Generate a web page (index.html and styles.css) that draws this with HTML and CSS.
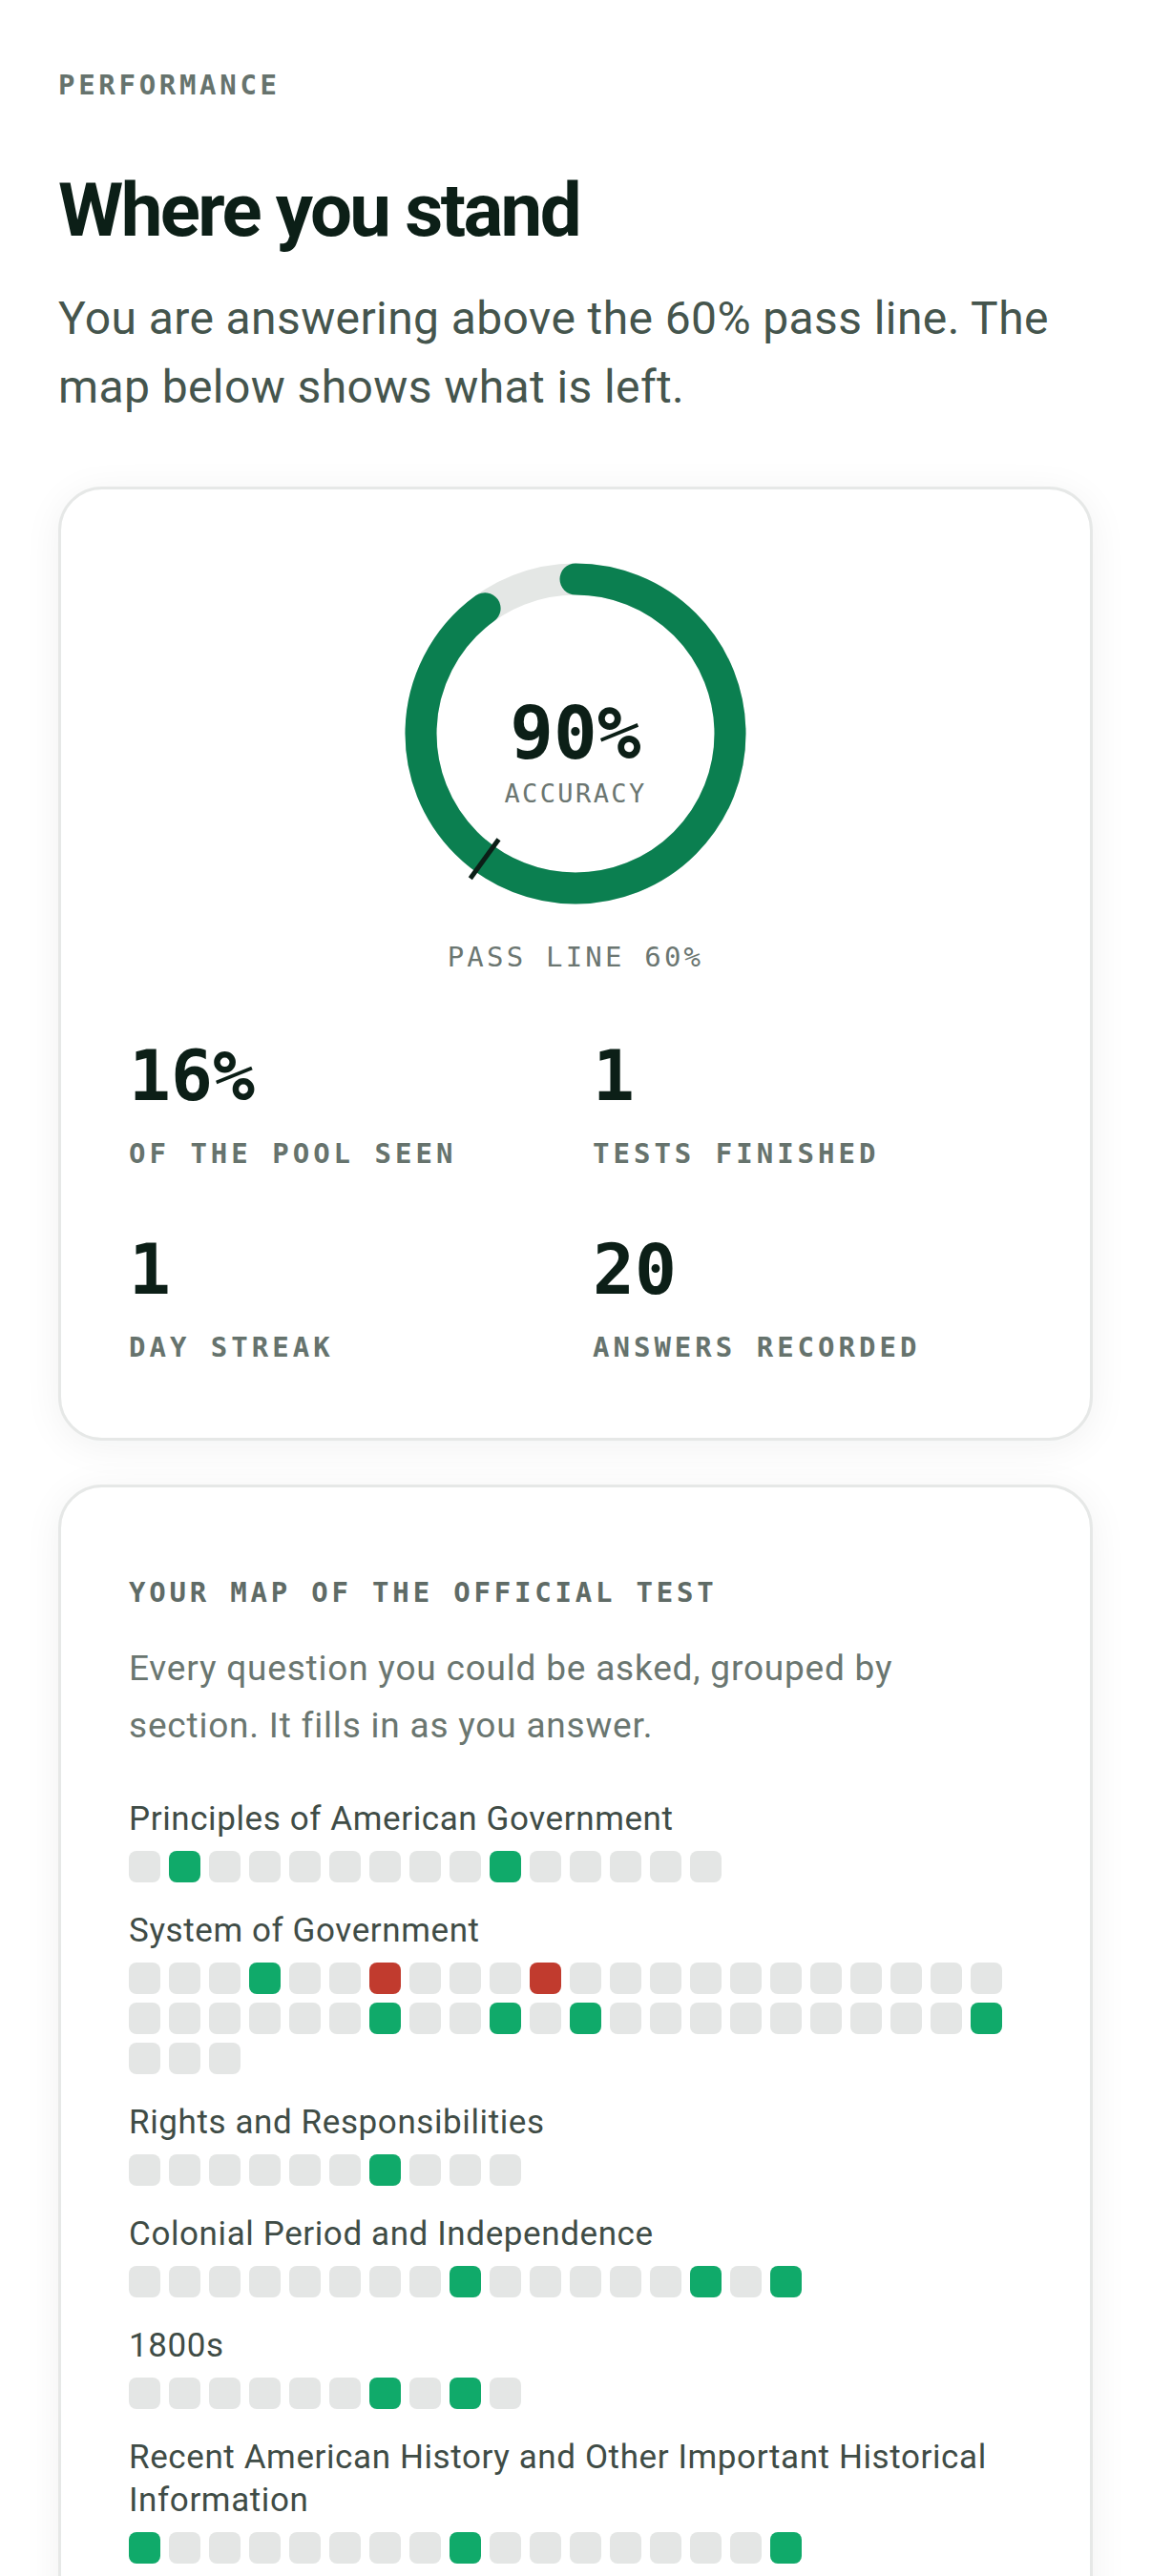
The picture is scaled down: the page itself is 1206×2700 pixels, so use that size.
FILE: index.html
```html
<!DOCTYPE html>
<html lang="en">
<head>
<meta charset="utf-8">
<title>Performance</title>
<link rel="stylesheet" href="styles.css">
</head>
<body>
<main class="page">
  <p class="eyebrow">PERFORMANCE</p>
  <h1 class="title">Where you stand</h1>
  <p class="lead">You are answering above the 60% pass line. The map below shows what is left.</p>

  <section class="card card-summary">
    <div class="ring">
      <svg class="ring-svg" viewBox="0 0 360 360" width="360" height="360" aria-hidden="true">
        <circle class="ring-track" cx="180" cy="180" r="162"/>
        <circle class="ring-fill" cx="180" cy="180" r="162" stroke-dasharray="916.1 1017.9" transform="rotate(-90 180 180)"/>
        <line class="ring-tick" x1="99.5" y1="290.8" x2="69.8" y2="331.7"/>
      </svg>
      <div class="ring-text">
        <div class="ring-value">90%</div>
        <div class="ring-caption">ACCURACY</div>
      </div>
    </div>
    <p class="pass-line">PASS LINE 60%</p>
    <div class="stats">
      <div class="stat">
        <div class="stat-value">16%</div>
        <div class="stat-label">OF THE POOL SEEN</div>
      </div>
      <div class="stat">
        <div class="stat-value">1</div>
        <div class="stat-label">TESTS FINISHED</div>
      </div>
      <div class="stat">
        <div class="stat-value">1</div>
        <div class="stat-label">DAY STREAK</div>
      </div>
      <div class="stat">
        <div class="stat-value">20</div>
        <div class="stat-label">ANSWERS RECORDED</div>
      </div>
    </div>
  </section>

  <section class="card card-map">
    <h2 class="map-title">YOUR MAP OF THE OFFICIAL TEST</h2>
    <p class="map-desc">Every question you could be asked, grouped by section. It fills in as you answer.</p>

    <div class="group">
      <p class="group-name">Principles of American Government</p>
      <div class="cells">
        <span class="cell"></span><span class="cell ok"></span><span class="cell"></span><span class="cell"></span><span class="cell"></span>
        <span class="cell"></span><span class="cell"></span><span class="cell"></span><span class="cell"></span><span class="cell ok"></span>
        <span class="cell"></span><span class="cell"></span><span class="cell"></span><span class="cell"></span><span class="cell"></span>
      </div>
    </div>

    <div class="group">
      <p class="group-name">System of Government</p>
      <div class="cells">
        <span class="cell"></span><span class="cell"></span><span class="cell"></span><span class="cell ok"></span><span class="cell"></span>
        <span class="cell"></span><span class="cell miss"></span><span class="cell"></span><span class="cell"></span><span class="cell"></span>
        <span class="cell miss"></span><span class="cell"></span><span class="cell"></span><span class="cell"></span><span class="cell"></span>
        <span class="cell"></span><span class="cell"></span><span class="cell"></span><span class="cell"></span><span class="cell"></span>
        <span class="cell"></span><span class="cell"></span>
        <span class="cell"></span><span class="cell"></span><span class="cell"></span><span class="cell"></span><span class="cell"></span>
        <span class="cell"></span><span class="cell ok"></span><span class="cell"></span><span class="cell"></span><span class="cell ok"></span>
        <span class="cell"></span><span class="cell ok"></span><span class="cell"></span><span class="cell"></span><span class="cell"></span>
        <span class="cell"></span><span class="cell"></span><span class="cell"></span><span class="cell"></span><span class="cell"></span>
        <span class="cell"></span><span class="cell ok"></span>
        <span class="cell"></span><span class="cell"></span><span class="cell"></span>
      </div>
    </div>

    <div class="group">
      <p class="group-name">Rights and Responsibilities</p>
      <div class="cells">
        <span class="cell"></span><span class="cell"></span><span class="cell"></span><span class="cell"></span><span class="cell"></span>
        <span class="cell"></span><span class="cell ok"></span><span class="cell"></span><span class="cell"></span><span class="cell"></span>
      </div>
    </div>

    <div class="group">
      <p class="group-name">Colonial Period and Independence</p>
      <div class="cells">
        <span class="cell"></span><span class="cell"></span><span class="cell"></span><span class="cell"></span><span class="cell"></span>
        <span class="cell"></span><span class="cell"></span><span class="cell"></span><span class="cell ok"></span><span class="cell"></span>
        <span class="cell"></span><span class="cell"></span><span class="cell"></span><span class="cell"></span><span class="cell ok"></span>
        <span class="cell"></span><span class="cell ok"></span>
      </div>
    </div>

    <div class="group">
      <p class="group-name">1800s</p>
      <div class="cells">
        <span class="cell"></span><span class="cell"></span><span class="cell"></span><span class="cell"></span><span class="cell"></span>
        <span class="cell"></span><span class="cell ok"></span><span class="cell"></span><span class="cell ok"></span><span class="cell"></span>
      </div>
    </div>

    <div class="group">
      <p class="group-name">Recent American History and Other Important Historical Information</p>
      <div class="cells">
        <span class="cell ok"></span><span class="cell"></span><span class="cell"></span><span class="cell"></span><span class="cell"></span>
        <span class="cell"></span><span class="cell"></span><span class="cell"></span><span class="cell ok"></span><span class="cell"></span>
        <span class="cell"></span><span class="cell"></span><span class="cell"></span><span class="cell"></span><span class="cell"></span>
        <span class="cell"></span><span class="cell ok"></span>
      </div>
    </div>

    <div class="group">
      <p class="group-name">Symbols</p>
      <div class="cells">
        <span class="cell"></span><span class="cell"></span><span class="cell ok"></span><span class="cell"></span><span class="cell"></span>
        <span class="cell"></span><span class="cell"></span>
      </div>
    </div>

    <div class="group">
      <p class="group-name">Holidays</p>
      <div class="cells">
        <span class="cell"></span><span class="cell ok"></span><span class="cell"></span><span class="cell"></span><span class="cell"></span>
      </div>
    </div>
  </section>
</main>
</body>
</html>
```

FILE: styles.css
```css
* {
  box-sizing: border-box;
}

html,
body {
  margin: 0;
  padding: 0;
  background: #ffffff;
}

body {
  font-family: Roboto, "Noto Sans", Arial, sans-serif;
  color: #0c1f17;
}

.page {
  padding: 69px 61px 160px;
}

.eyebrow {
  margin: 0;
  font-family: "DejaVu Sans Mono", "Liberation Mono", monospace;
  font-weight: 700;
  font-size: 29px;
  line-height: 40px;
  letter-spacing: 3.7px;
  color: #66736d;
}

.title {
  margin: 67px 0 0;
  font-size: 78px;
  line-height: 90px;
  font-weight: 700;
  color: #0c1f17;
  letter-spacing: -2.6px;
}

.lead {
  margin: 32px 0 0;
  font-size: 48px;
  line-height: 72px;
  color: #45554d;
  letter-spacing: 0.4px;
}

.card {
  background: #ffffff;
  border: 3px solid #e6e8e7;
  border-radius: 46px;
  box-shadow: 0 6px 40px rgba(20, 40, 30, 0.06);
}

.card-summary {
  margin-top: 68px;
  padding: 76px 71px 75px;
}

.ring {
  display: grid;
  justify-content: center;
}

.ring-svg {
  grid-area: 1 / 1;
  display: block;
  width: 360px;
  height: 360px;
  overflow: visible;
}

.ring-track {
  fill: none;
  stroke: #e4e7e5;
  stroke-width: 33;
}

.ring-fill {
  fill: none;
  stroke: #0b7f50;
  stroke-width: 33;
  stroke-linecap: round;
}

.ring-tick {
  stroke: #0c1f17;
  stroke-width: 5;
}

.ring-text {
  grid-area: 1 / 1;
  align-self: start;
  margin-top: 140px;
  text-align: center;
  font-family: "DejaVu Sans Mono", "Liberation Mono", monospace;
}

.ring-value {
  font-size: 76px;
  line-height: 80px;
  font-weight: 700;
  color: #0c1f17;
}

.ring-caption {
  margin-top: 3px;
  font-size: 27px;
  line-height: 40px;
  letter-spacing: 2.4px;
  color: #6b7671;
}

.pass-line {
  margin: 34px 0 0;
  text-align: center;
  font-family: "DejaVu Sans Mono", "Liberation Mono", monospace;
  font-size: 29px;
  line-height: 40px;
  letter-spacing: 3.2px;
  color: #6b7671;
}

.stats {
  display: grid;
  grid-template-columns: 1fr 1fr;
  column-gap: 36px;
  row-gap: 62px;
  margin-top: 65px;
}

.stat-value {
  font-family: "DejaVu Sans Mono", "Liberation Mono", monospace;
  font-weight: 700;
  font-size: 73px;
  line-height: 80px;
  color: #0c1f17;
}

.stat-label {
  margin-top: 21px;
  font-family: "DejaVu Sans Mono", "Liberation Mono", monospace;
  font-weight: 700;
  font-size: 29px;
  line-height: 40px;
  letter-spacing: 4px;
  color: #66736d;
}

.card-map {
  margin-top: 46px;
  padding: 90px 71px 80px;
}

.map-title {
  margin: 0;
  font-family: "DejaVu Sans Mono", "Liberation Mono", monospace;
  font-weight: 700;
  font-size: 29px;
  line-height: 40px;
  letter-spacing: 3.8px;
  color: #5f6b66;
}

.map-desc {
  margin: 30px 0 0;
  font-size: 37px;
  line-height: 60px;
  letter-spacing: 0.8px;
  color: #6a7670;
}

.group {
  margin-top: 28px;
}

.map-desc + .group {
  margin-top: 45px;
}

.group-name {
  margin: 0;
  font-size: 35px;
  line-height: 45px;
  letter-spacing: 0.6px;
  color: #3f4c46;
}

.cells {
  display: flex;
  flex-wrap: wrap;
  gap: 9px;
  margin-top: 11px;
}

.cell {
  width: 33px;
  height: 33px;
  border-radius: 8px;
  background: #e4e6e5;
}

.cell.ok {
  background: #10aa6a;
}

.cell.miss {
  background: #c13b2e;
}
```
